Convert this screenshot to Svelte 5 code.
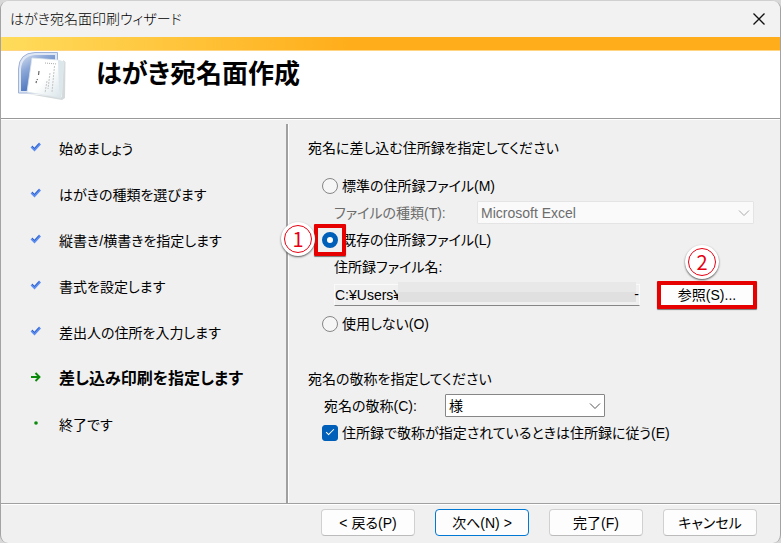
<script>
	let steps = [
		{ text: "始めましょう", state: "done" },
		{ text: "はがきの種類を選びます", state: "done" },
		{ text: "縦書き/横書きを指定します", state: "done" },
		{ text: "書式を設定します", state: "done" },
		{ text: "差出人の住所を入力します", state: "done" },
		{ text: "差し込み印刷を指定します", state: "current" },
		{ text: "終了です", state: "todo" }
	];
	let source = "existing";
	let fileType = "Microsoft Excel";
	let path = "C:¥Users¥";
	let title = "様";
	let followBook = true;
</script>

<main>
	<header class="titlebar">
		<span>はがき宛名面印刷ウィザード</span>
		<button type="button" class="close" aria-label="閉じる">
			<svg width="14" height="14" viewBox="0 0 14 14"><path d="M1.5 1.5 12.5 12.5M12.5 1.5 1.5 12.5" stroke="#111" stroke-width="1.3" fill="none" /></svg>
		</button>
	</header>
	<div class="gold"></div>

	<div class="banner">
		<svg class="logo" width="52" height="52" viewBox="0 0 52 52">
			<defs>
				<linearGradient id="blue" x1="0" y1="0" x2="0.6" y2="1">
					<stop offset="0" stop-color="#d3def0" />
					<stop offset="0.35" stop-color="#8ea9d8" />
					<stop offset="1" stop-color="#3562b4" />
				</linearGradient>
				<linearGradient id="paper" x1="0" y1="0" x2="1" y2="1">
					<stop offset="0.5" stop-color="#ffffff" />
					<stop offset="1" stop-color="#d5e2e7" />
				</linearGradient>
			</defs>
			<path d="M1.5 42V18Q2 2 18 1.5H40.5V42Z" fill="#dfe7f4" stroke="#9fb2d8" />
			<path d="M4 40V18Q5 5 18 4H38V40Z" fill="url(#blue)" />
			<path d="M11 43 45 49 48 47 48.500 11 46 9 45 46Z" fill="#aab4b8" opacity="0.5" />
			<path d="M15 7 41 9 47 11 44 47 10 41Z" fill="url(#paper)" stroke="#dde4e8" stroke-width="0.8" />
			<path d="M41 9 42 39 44 46 47 11Z" fill="#dce7eb" />
			<path d="M22 20 21.500 24M20.500 28 20 29M19.500 30 19 32" stroke="#666" stroke-width="1.200" />
			<path d="M28 12 40 13" stroke="#aaa" stroke-dasharray="1 1" />
			<path d="M37.500 15 35 41M33 22 31 38M30 30 28 42" stroke="#c4c4c4" stroke-dasharray="2 1" fill="none" />
		</svg>
		<h1>はがき宛名面作成</h1>
	</div>

	<div class="body">
		<ol class="steps">
			{#each steps as step}
				<li class={step.state}>
					<svg width="12" height="12" viewBox="0 0 12 12">
						{#if step.state == "done"}
							<path d="M1.500 5.500 4.500 8.500 10 2.500" stroke="#5a8cf0" stroke-width="2.600" fill="none" />
							<path d="M2 5 4.500 7.500 9 2.500" stroke="#2b55b8" stroke-width="0.8" fill="none" />
						{:else if step.state == "current"}
							<path d="M1 6H9.500M5.500 2 9.500 6 5.500 10" stroke="#0b8a0b" stroke-width="1.900" fill="none" />
						{:else}
							<circle cx="6" cy="6" r="1.800" fill="#0b8a0b" />
						{/if}
					</svg>
					<span>{step.text}</span>
				</li>
			{/each}
		</ol>

		<form class="settings">
			<h2>宛名に差し込む住所録を指定してください</h2>
			<div class="row">
				<input type="radio" id="standard" value="standard" bind:group={source} />
				<label for="standard">標準の住所録ファイル(M)</label>
			</div>
			<div class="row indent">
				<label class="type disabled" for="type">ファイルの種類(T):</label>
				<div class="drop wide">
					<select id="type" bind:value={fileType} disabled>
						<option>Microsoft Excel</option>
					</select>
					<svg width="12" height="12" viewBox="0 0 12 12"><path d="M1 3.500 6 8.500 11 3.500" stroke="#aaa" fill="none" /></svg>
				</div>
			</div>
			<div class="row">
				<input type="radio" id="existing" value="existing" bind:group={source} />
				<label for="existing">既存の住所録ファイル(L)</label>
				<div class="mark"></div>
				<div class="badge one"><span>1</span></div>
			</div>
			<div class="row indent">
				<label for="path">住所録ファイル名:</label>
			</div>
			<div class="row file indent">
				<div class="path">
					<input type="text" id="path" readonly bind:value={path} />
					<div class="mosaic"></div>
					<span class="tail">-</span>
				</div>
				<div class="browse">
					<button type="button">参照(S)...</button>
					<div class="badge two"><span>2</span></div>
				</div>
			</div>
			<div class="row">
				<input type="radio" id="none" value="none" bind:group={source} />
				<label for="none">使用しない(O)</label>
			</div>

			<h2 class="second">宛名の敬称を指定してください</h2>
			<div class="row">
				<label class="honor" for="honor">宛名の敬称(C):</label>
				<div class="drop">
					<select id="honor" bind:value={title}>
						<option>様</option>
					</select>
					<svg width="12" height="12" viewBox="0 0 12 12"><path d="M1 3.500 6 8.500 11 3.500" stroke="#555" fill="none" /></svg>
				</div>
			</div>
			<div class="row">
				<input type="checkbox" id="follow" bind:checked={followBook} />
				<label for="follow">住所録で敬称が指定されているときは住所録に従う(E)</label>
			</div>
		</form>
	</div>

	<footer>
		<button type="button">&lt; 戻る(P)</button>
		<button type="button" class="default">次へ(N) &gt;</button>
		<button type="button">完了(F)</button>
		<button type="button">キャンセル</button>
	</footer>
</main>

<style>
	:global(body) {
		background: #d8d8d8;
	}

	main {
		box-sizing: border-box;
		display: flex;
		flex-direction: column;
		min-height: 100vh;
		border: 1px solid #a3a3a3;
		border-top-color: #d0d0d0;
		border-bottom: 0;
		border-radius: 9px 9px 8px 8px;
		overflow: hidden;
		background: #f0f0f0;
		color: #000;
		font-family: "Liberation Sans", "Noto Sans CJK JP", sans-serif;
		font-size: 14px;
		line-height: 20px;
		font-feature-settings: "palt";
	}

	button, input, select {
		box-sizing: border-box;
		margin: 0;
		font: inherit;
		font-feature-settings: inherit;
		color: inherit;
	}

	.titlebar {
		display: flex;
		align-items: center;
		justify-content: space-between;
		height: 36px;
		padding: 0 14px 0 9px;
		background: #f2f2f2;
		font-weight: 300;
	}

	.close {
		display: flex;
		padding: 0;
		border: 0;
		background: none;
	}

	.gold {
		height: 13px;
		border-bottom: 1px solid #ffd584;
		background: linear-gradient(90deg, #ffdc5c, #ffad1a 45%);
	}

	.banner {
		display: flex;
		align-items: flex-start;
		gap: 27px;
		height: 67px;
		padding-left: 16px;
		border-bottom: 1px solid #999;
		background: #fff;
	}

	h1 {
		margin: 7px 0 0;
		font-size: 26px;
		font-weight: 700;
		line-height: 32px;
	}

	.body {
		flex: 1;
		display: flex;
		border-top: 1px solid #fff;
		border-bottom: 1px solid #a0a0a0;
	}

	.steps {
		box-sizing: border-box;
		flex: none;
		width: 287px;
		margin: 4px 0 0;
		padding: 2px 0 0;
		list-style: none;
		border-right: 2px solid #a0a0a0;
		box-shadow: 1px 0 #fff;
	}

	.steps li {
		display: flex;
		align-items: center;
		gap: 17px;
		height: 46px;
		padding-left: 29px;
	}

	.steps .current {
		font-size: 16px;
		font-weight: 700;
	}

	.steps svg {
		margin-bottom: 4px;
	}

	.settings {
		flex: 1;
		padding: 14px 22px 0 20px;
	}

	h2 {
		margin: 0 0 10px;
		font-size: 14px;
		font-weight: 400;
		line-height: 28px;
	}

	h2.second {
		margin: 29px 0 0;
		line-height: 26px;
	}

	.row {
		position: relative;
		display: flex;
		align-items: center;
		height: 27px;
		padding-left: 14px;
	}

	.row.indent {
		padding-left: 26px;
	}

	.row.file {
		justify-content: space-between;
		gap: 17px;
		height: 30px;
	}

	input[type="radio"] {
		appearance: none;
		flex: none;
		width: 16px;
		height: 16px;
		margin-right: 4px;
		border: 1px solid #868686;
		border-radius: 50%;
		background: #f6f6f6;
	}

	input[type="radio"]:checked {
		border: 5px solid #005fb8;
		background: #fff;
	}

	input[type="checkbox"] {
		appearance: none;
		flex: none;
		display: grid;
		place-items: center;
		width: 16px;
		height: 16px;
		margin-right: 4px;
		border: 1px solid #868686;
		border-radius: 3px;
		background: #fff;
	}

	input[type="checkbox"]:checked {
		border-color: #005fb8;
		background: #005fb8;
	}

	input[type="checkbox"]:checked::after {
		content: "";
		width: 7px;
		height: 3px;
		margin-bottom: 3px;
		border: solid #fff;
		border-width: 0 0 1px 1px;
		transform: rotate(-45deg);
	}

	.disabled {
		color: #6d6d6d;
	}

	.type {
		width: 143px;
	}

	.honor {
		box-sizing: border-box;
		width: 123px;
		padding-left: 2px;
	}

	.drop {
		display: grid;
		align-items: center;
		width: 160px;
	}

	.drop.wide {
		flex: 1;
		margin-right: 4px;
	}

	.drop select, .drop svg {
		grid-area: 1 / 1;
	}

	.drop svg {
		justify-self: end;
		margin-right: 4px;
		pointer-events: none;
	}

	select {
		appearance: none;
		width: 100%;
		height: 23px;
		padding: 0 20px 0 3px;
		border: 1px solid #868686;
		border-radius: 1px;
		background: #fff;
	}

	select:disabled {
		border-color: #e4e4e4;
		background: #fafafa;
		color: #6d6d6d;
		opacity: 1;
	}

	.path {
		position: relative;
		flex: 1;
		display: flex;
	}

	.path input {
		width: 100%;
		height: 22px;
		padding: 0;
		border: 1px solid #fafafa;
		border-bottom-color: #868686;
		background: #f0f0f0;
	}

	.mosaic {
		position: absolute;
		inset: -2px 4px 4px 64px;
		background: linear-gradient(#e8e8e8 50%, #e0e0e0 50%);
	}

	.tail {
		position: absolute;
		right: 1px;
		top: 0;
	}

	.browse {
		position: relative;
		flex: none;
		width: 100px;
		margin-right: 1px;
	}

	.browse button {
		display: block;
		width: 100%;
		height: 28px;
		padding: 0;
		border: 4px solid #e60000;
		border-radius: 1px;
		background: #fdfdfd;
		box-shadow: 0 1px 1px #777;
		line-height: 18px;
	}

	.mark {
		position: absolute;
		left: 6px;
		top: -2px;
		box-sizing: border-box;
		width: 32px;
		height: 32px;
		border: 4px solid #e60000;
		border-radius: 1px;
		box-shadow: 0 1px 1px #777;
	}

	.badge {
		position: absolute;
		box-sizing: border-box;
		width: 34px;
		height: 34px;
		padding: 3px;
		border-radius: 50%;
		background: #fff;
		box-shadow: 0 1px 2px #555;
	}

	.badge span {
		display: block;
		box-sizing: border-box;
		height: 28px;
		border: 1px solid #e60012;
		border-radius: 50%;
		color: #e60012;
		font-family: "Noto Sans CJK JP", sans-serif;
		font-size: 20px;
		line-height: 25px;
		text-align: center;
	}

	.badge.one {
		left: -27px;
		top: -4px;
	}

	.badge.two {
		left: 28px;
		top: -36px;
	}

	footer {
		display: flex;
		justify-content: flex-end;
		gap: 20px;
		padding: 4px 23px 7px;
		border-top: 1px solid #fff;
	}

	footer button {
		width: 94px;
		height: 27px;
		padding: 0;
		border: 1px solid #d0d0d0;
		border-bottom-color: #bbb;
		border-radius: 4px;
		background: #fdfdfd;
	}

	footer .default {
		border-color: #0078d4;
	}
</style>
